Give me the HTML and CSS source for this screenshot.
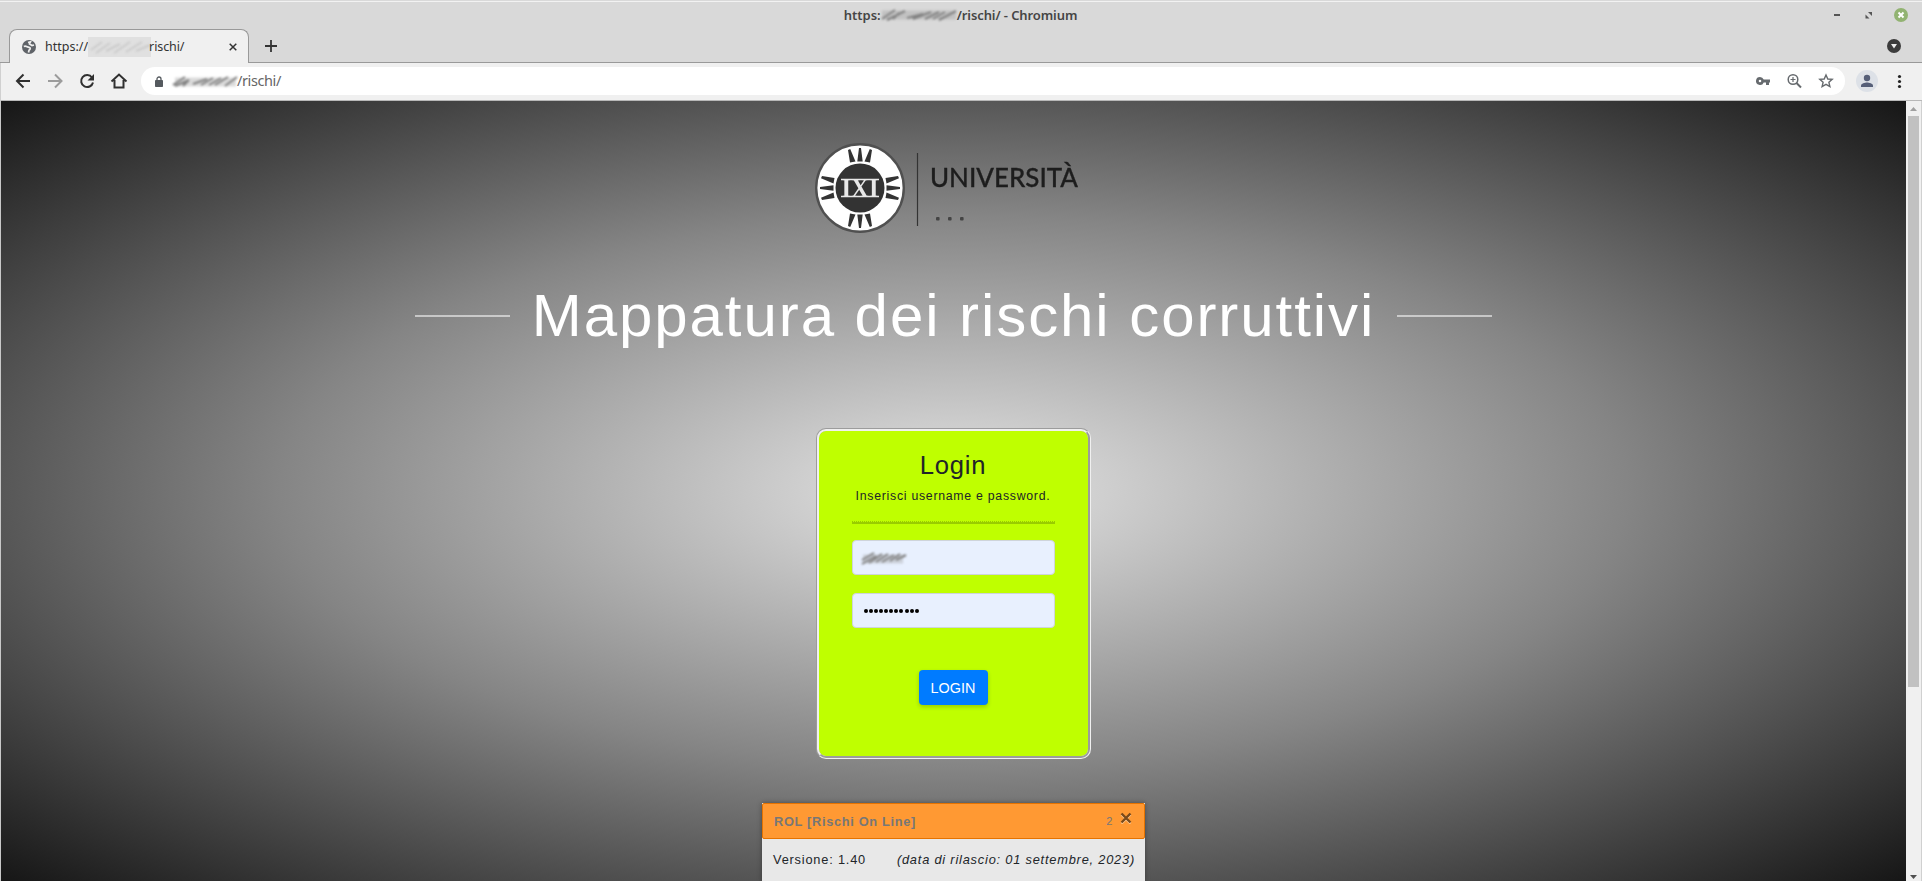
FILE: index.html
```html
<!DOCTYPE html>
<html lang="it">
<head>
<meta charset="utf-8">
<title>Mappatura dei rischi corruttivi</title>
<link rel="stylesheet" href="styles.css">
</head>
<body>
<div class="window">
  <header class="titlebar">
    <div class="caption"><span>https:</span><svg class="smudge" width="80" height="18" viewBox="0 0 80 18"><g class="ink"><path d="M3 13L16 4M8 14L26 5M14 13L20 7M28 12L44 8M34 13L52 6M46 13L60 6M54 13L66 6M60 14L77 5"/><path class="haze" d="M3 9H77"/></g></svg><span class="cap-end">/rischi/ - Chromium</span></div>
    <div class="controls">
      <svg width="80" height="20" viewBox="0 0 80 20"><path d="M2 10h6" stroke="#555" stroke-width="2"/><path d="M36 7h4v4zM33.500 9.500v4h4z" fill="#555"/><circle cx="69" cy="10" r="7" fill="#92b372"/><path d="M66.500 7.500l5 5M71.500 7.500l-5 5" stroke="#fff" stroke-width="2"/></svg>
    </div>
  </header>
  <nav class="tabstrip">
    <div class="foot foot-left"></div>
    <div class="tab">
      <svg class="globe" width="14" height="14" viewBox="0 0 14 14"><circle cx="7" cy="7" r="7" fill="#5f6368"/><path d="M1.800 6.500C4 5.500 5 7 7 7.300C9 7.800 8.300 9.500 7 10.300L6.500 12.500M6 2.500L8.500 1.800L7.500 4L10 5.500L12 5" fill="none" stroke="#eee" stroke-width="1.700"/></svg>
      <span class="tab-text">https://</span>
      <svg class="smudge tab-smudge" width="63" height="20" viewBox="0 0 63 20"><rect width="63" height="20" fill="#e0e0e0"/><g class="ink pale"><path d="M3 13L14 5M8 16L22 6M18 14L32 7M26 16L42 5M38 15L54 5M48 14L62 8"/></g></svg>
      <span class="tab-text tab-end">rischi/</span>
      <svg class="tab-close" width="8" height="8" viewBox="0 0 8 8"><path d="M.7.7l6.600 6.600M7.300.7L.7 7.300" stroke="#333" stroke-width="1.500"/></svg>
    </div>
    <div class="foot foot-right"></div>
    <div class="strip-rest">
      <svg class="plus" width="12" height="12" viewBox="0 0 12 12"><path d="M6 0v12M0 6h12" stroke="#333" stroke-width="1.800"/></svg>
      <svg class="tab-search" width="14" height="14" viewBox="0 0 14 14"><circle cx="7" cy="7" r="7" fill="#3c3c3c"/><path d="M4 5h6l-3 4.500z" fill="#eee"/></svg>
    </div>
  </nav>
  <div class="toolbar">
    <svg class="nav" width="128" height="24" viewBox="0 0 128 24" fill="none" stroke-width="2">
      <path d="M29 12H16.500M22.500 5.500L16 12l6.500 6.500" stroke="#303030"/>
      <path d="M47 12h12.500M54 5.500l6.500 6.500-6.500 6.500" stroke="#9c9c9c"/>
      <path d="M91 8.500A6 6 0 1 0 92 13.500" stroke="#303030"/><path d="M93 5v6.500h-6.500z" fill="#303030"/>
      <path d="M110.500 12.500L118 5.500l7.500 7M113.500 11v7.500h9V11" stroke="#303030"/>
    </svg>
    <div class="omnibox">
      <svg class="lock" width="8" height="11" viewBox="0 0 8 11"><rect y="4" width="8" height="7" rx=".8" fill="#555a5f"/><path d="M2 5V3a2 2 0 0 1 4 0v2" fill="none" stroke="#555a5f" stroke-width="1.300"/></svg>
      <svg class="smudge url-smudge" width="68" height="18" viewBox="0 0 68 18"><g class="ink"><path d="M2 13L14 5M4 14L18 8M12 14L18 8M22 12L36 7M30 13L42 6M38 13L50 6M44 13L57 5M54 14L66 5"/><path class="haze" d="M4 10H65"/></g></svg>
      <span class="url">/rischi/</span>
      <svg class="omni-icons" width="86" height="20" viewBox="0 0 86 20" fill="none" stroke="#666a6e">
        <path d="M5 6a4 4 0 1 0 3.700 5.500H11V14h3v-2.500h1v-3H8.700A4 4 0 0 0 5 6zm0 2.700a1.300 1.300 0 1 1 0 2.600 1.300 1.300 0 0 1 0-2.600z" fill="#666a6e" fill-rule="evenodd" stroke="none"/>
        <circle cx="38" cy="8.500" r="4.800" stroke-width="1.500"/><path d="M41.500 12l4.500 4.500" stroke-width="2"/><path d="M38 6v5M35.500 8.500h5" stroke-width="1.200"/>
        <path d="M71 4l1.800 4 4.400.4-3.300 2.900 1 4.300L71 13.300l-3.900 2.300 1-4.300-3.300-2.900 4.400-.4z" stroke-width="1.400"/>
      </svg>
    </div>
    <svg class="profile" width="64" height="24" viewBox="0 0 64 24"><circle cx="13" cy="12" r="11" fill="#dde1e7"/><circle cx="13" cy="9" r="3.200" fill="#565f78"/><path d="M7 18v-1.500c0-2 4-3 6-3s6 1 6 3V18z" fill="#565f78"/><g fill="#222"><circle cx="45.500" cy="7.500" r="1.600"/><circle cx="45.500" cy="12.500" r="1.600"/><circle cx="45.500" cy="17.500" r="1.600"/></g></svg>
  </div>
  <div class="viewport">
    <main class="page">
      <svg class="logo" width="280" height="94" viewBox="0 0 280 94">
        <circle cx="46" cy="47" r="43.800" fill="#fff" stroke="#505050" stroke-width="2.400"/>
        <circle cx="46" cy="47" r="24.500" fill="#333"/>
        <g fill="#333">
          <g id="rays"><path d="M43.300 20.500L45 7h2l1.700 13.500zM36 21.500L34 9l2.200-1L41.500 20.500zM56 21.500L58 9l-2.200-1L50.500 20.500z"/></g>
          <use href="#rays" transform="rotate(90 46 47)"/><use href="#rays" transform="rotate(180 46 47)"/><use href="#rays" transform="rotate(270 46 47)"/>
        </g>
        <text x="46" y="56" class="seal" textLength="37" lengthAdjust="spacingAndGlyphs">IXI</text>
        <path d="M27 38.500h38M27 55.500h38" stroke="#e8e8e8" stroke-width="1.300"/>
        <path d="M103.500 12v73" stroke="#333" stroke-width="1.200"/>
        <text x="116" y="46" class="wordmark" textLength="148" lengthAdjust="spacingAndGlyphs">UNIVERSITÀ</text>
        <g fill="#444"><rect x="122" y="76" width="3.600" height="3.600" rx="1"/><rect x="134" y="76" width="3.600" height="3.600" rx="1"/><rect x="146" y="76" width="3.600" height="3.600" rx="1"/></g>
      </svg>
      <h1 class="title">Mappatura dei rischi corruttivi</h1>
      <form class="card">
        <h2 class="card-title">Login</h2>
        <p class="hint">Inserisci username e password.</p>
        <div class="rule"></div>
        <div class="field"><svg class="smudge" width="48" height="18" viewBox="0 0 48 18"><g class="ink"><path d="M2 15L16 7M2 11L14 4M9 14L22 5M16 13L28 5M22 13L34 6M30 12L40 5M36 11L46 6"/><path class="haze" d="M3 10H43"/></g></svg></div>
        <div class="field"><span class="dots"><i></i><i></i><i></i><i></i><i></i><i></i><i></i><i></i><i></i><i></i><i></i></span></div>
        <button class="submit" type="button">LOGIN</button>
      </form>
    </main>
    <aside class="scrollbar">
      <svg width="15" height="15" viewBox="0 0 15 15"><path d="M4 10l3.500-4L11 10z" fill="#a0a0a0"/></svg>
      <div class="thumb"></div>
      <svg class="down" width="15" height="9" viewBox="0 0 15 9"><path d="M4 3h7l-3.500 4z" fill="#505050"/></svg>
    </aside>
    <section class="notice">
      <header class="notice-head"><strong>ROL [Rischi On Line]</strong><small>2</small><svg width="12" height="12" viewBox="0 0 12 12"><path d="M1.500 2.500l9 9M10.500 2.500l-9 9" stroke="#ffd0a0" stroke-width="2.200"/><path d="M1.500 1.500l9 9M10.500 1.500l-9 9" stroke="#7a4a1a" stroke-width="2.400"/></svg></header>
      <div class="notice-body"><span>Versione: 1.40</span><em>(data di rilascio: 01 settembre, 2023)</em></div>
    </section>
  </div>
</div>
</body>
</html>
```
FILE: styles.css
```css
* { box-sizing: border-box; }
body { margin: 0; background: #d9d9d9; font-family: "Liberation Sans", Arial, sans-serif; color: #212529; }
svg { display: block; flex: none; }
.window { width: 1922px; height: 881px; display: flex; flex-direction: column; overflow: hidden; font-family: "Noto Sans", sans-serif; }

.titlebar { height: 29px; display: flex; justify-content: center; border-top: 1px solid #d9d9d9; box-shadow: inset 0 1px #f2f2f2; background: #d9d9d9; position: relative; }
.caption { display: flex; align-items: center; height: 28px; font-size: 13px; font-weight: 600; color: #454545; padding-right: 1px; }
.caption .smudge { margin: 0 -2px; }
.cap-end { letter-spacing: -.1px; }
.controls { position: absolute; right: 10px; top: 4px; }
.ink { fill: none; stroke: #777; stroke-width: 2; filter: blur(1px); }
.ink.pale { stroke: #cacaca; }
.ink .haze { stroke: #999; stroke-width: 9; opacity: .35; }

.tabstrip { height: 34px; display: flex; background: #d9d9d9; }
.foot { width: 9px; border-bottom: 1px solid #999; }
.foot-right { width: 8px; }
.tab { width: 240px; height: 34px; display: flex; align-items: center; padding-left: 12px; border: 1px solid #999; border-bottom: 0; border-radius: 8px 8px 0 0; background: #f0f0f0; font-size: 13px; color: #333; }
.tab-text { margin-left: 9px; font-size: 12.5px; }
.tab-smudge { margin-left: 0; }
.tab-end { margin-left: -2px; letter-spacing: -.1px; }
.tab-close { margin-left: auto; margin-right: 11px; }
.strip-rest { flex: 1; display: flex; align-items: center; justify-content: space-between; padding: 0 21px 0 8px; border-bottom: 1px solid #999; }

.toolbar { height: 38px; display: flex; align-items: center; padding-bottom: 1px; background: #f0f0f0; border-left: 1px solid #d0d0d0; border-bottom: 1px solid #b8b8b8; }
.omnibox { width: 1704px; height: 28px; margin-left: 12px; display: flex; align-items: center; padding: 0 4px 0 14px; background: #fff; border-radius: 14px; }
.url-smudge { margin-left: 8px; }
.url { font-size: 14.5px; line-height: 20px; color: #666; margin: 0 0 2px -2px; letter-spacing: -.4px; }
.omni-icons { margin-left: auto; }
.profile { margin-left: 9px; }

.viewport { flex: 1; display: flex; position: relative; border-left: 1px solid #c8c8c8; border-right: 1px solid #d0d0d0; }
.page { width: 1905px; display: flex; flex-direction: column; align-items: center; padding-top: 40px; font-family: "Liberation Sans", Arial, sans-serif; background: radial-gradient(ellipse at center, #e4e4e4 0%, #858585 50%, #161616 100%); }
.logo { filter: blur(.6px); }
.seal { font: 700 27px "Liberation Serif", serif; text-anchor: middle; fill: #e8e8e8; }
.wordmark { font: 500 27px Lato, sans-serif; fill: #1d1d1d; stroke: #1d1d1d; stroke-width: .3px; }
.title { display: flex; align-items: center; gap: 22px; margin: 45px 0 0; font-size: 60px; line-height: 72px; font-weight: 400; letter-spacing: 1.93px; color: #fff; white-space: nowrap; }
.title::before, .title::after { content: ""; width: 95px; height: 2px; background: rgba(255,255,255,.55); }

.card { width: 275px; height: 331px; margin-top: 76px; padding: 16px 33px 16px 32px; display: flex; flex-direction: column; align-items: center; border: 3px groove #f0f0f0; border-radius: 10px; background: #bfff00; }
.card-title { margin: 3px 0 0; font-size: 25.6px; line-height: 31px; font-weight: 400; letter-spacing: .8px; }
.hint { margin: 6px 0 0; font-size: 12.3px; line-height: 18px; letter-spacing: .73px; white-space: nowrap; }
.rule { width: 203px; height: 3px; margin: 16px 0; border-top: 1px dotted #99cc00; background: #99cc00 padding-box; }
.field { width: 203px; height: 35px; margin-bottom: 18px; display: flex; align-items: center; padding-left: 7px; border: 1px solid #ced4da; border-radius: 4px; background: #e8f0fe; }
.dots { display: flex; gap: 1.15px; padding-left: 4px; }
.dots i { width: 4px; height: 4px; border-radius: 50%; background: #000; }
.submit { width: 69px; height: 35px; margin-top: 24px; padding: 0; border: 0; border-radius: 4px; background: #007bff; color: #fff; font: 14.4px "Liberation Sans", Arial, sans-serif; box-shadow: 0 2px 4px rgba(0,0,0,.2); }

.scrollbar { width: 15px; display: flex; flex-direction: column; background: #f0f0f0; }
.thumb { width: 11px; height: 571px; margin-left: 2px; background: #c1c1c1; }
.down { margin-top: auto; }

.notice { position: absolute; left: 761px; top: 702px; width: 383px; height: 79px; font-family: "Liberation Sans", Arial, sans-serif; font-size: 12.8px; letter-spacing: .8px; background: #e8e8e8; box-shadow: 0 0 5px rgba(0,0,0,.35); }
.notice-head { height: 36px; display: flex; align-items: center; padding: 0 12px 0 11px; background: #ff9933; border: 1px solid #e67300; border-radius: 2px; color: #777; letter-spacing: .68px; }
.notice-head small { margin-left: auto; margin-right: 7px; font-size: 11px; }
.notice-head svg { margin-top: -6px; }
.notice-body { display: flex; justify-content: space-between; padding: 13px 10px 0 11px; }
```
